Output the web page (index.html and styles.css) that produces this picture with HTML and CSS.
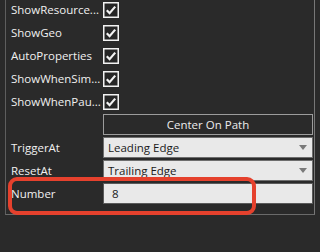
FILE: index.html
```html
<!DOCTYPE html>
<html>
<head>
<meta charset="utf-8">
<link rel="stylesheet" href="styles.css">
</head>
<body>
<div class="group">
  <div class="row"><div class="label">ShowResource...</div><div class="value"><span class="check"><svg width="16" height="16" viewBox="0 0 16 16"><rect x="0.75" y="0.75" width="14.5" height="14.5" fill="#262626" stroke="#f2f2f2" stroke-width="1.5"/><path d="M3.8 8.2 L6.6 11.2 L12.2 4.6" fill="none" stroke="#f2f2f2" stroke-width="2.2"/></svg></span></div></div>
  <div class="row"><div class="label">ShowGeo</div><div class="value"><span class="check"><svg width="16" height="16" viewBox="0 0 16 16"><rect x="0.75" y="0.75" width="14.5" height="14.5" fill="#262626" stroke="#f2f2f2" stroke-width="1.5"/><path d="M3.8 8.2 L6.6 11.2 L12.2 4.6" fill="none" stroke="#f2f2f2" stroke-width="2.2"/></svg></span></div></div>
  <div class="row"><div class="label">AutoProperties</div><div class="value"><span class="check"><svg width="16" height="16" viewBox="0 0 16 16"><rect x="0.75" y="0.75" width="14.5" height="14.5" fill="#262626" stroke="#f2f2f2" stroke-width="1.5"/><path d="M3.8 8.2 L6.6 11.2 L12.2 4.6" fill="none" stroke="#f2f2f2" stroke-width="2.2"/></svg></span></div></div>
  <div class="row"><div class="label">ShowWhenSim...</div><div class="value"><span class="check"><svg width="16" height="16" viewBox="0 0 16 16"><rect x="0.75" y="0.75" width="14.5" height="14.5" fill="#262626" stroke="#f2f2f2" stroke-width="1.5"/><path d="M3.8 8.2 L6.6 11.2 L12.2 4.6" fill="none" stroke="#f2f2f2" stroke-width="2.2"/></svg></span></div></div>
  <div class="row"><div class="label">ShowWhenPau...</div><div class="value"><span class="check"><svg width="16" height="16" viewBox="0 0 16 16"><rect x="0.75" y="0.75" width="14.5" height="14.5" fill="#262626" stroke="#f2f2f2" stroke-width="1.5"/><path d="M3.8 8.2 L6.6 11.2 L12.2 4.6" fill="none" stroke="#f2f2f2" stroke-width="2.2"/></svg></span></div></div>
  <div class="row"><div class="label"></div><div class="value"><div class="button">Center On Path</div></div></div>
  <div class="row"><div class="label">TriggerAt</div><div class="value"><div class="combo"><span>Leading Edge</span><span class="arrow"></span></div></div></div>
  <div class="row"><div class="label">ResetAt</div><div class="value"><div class="combo"><span>Trailing Edge</span><span class="arrow"></span></div></div></div>
  <div class="row"><div class="label">Number</div><div class="value"><div class="textbox">8</div></div></div>
</div>
<div class="annot"></div>
</body>
</html>
```
FILE: styles.css
```css
html, body {
  margin: 0;
  padding: 0;
}
body {
  background: #2a2a2a;
  width: 320px;
  height: 252px;
  overflow: hidden;
  position: relative;
  font-family: "Open Sans", "Noto Sans", sans-serif;
  font-size: 11.5px;
  color: #f0f0f0;
}
.group {
  margin-top: -2px;
  margin-left: 5px;
  width: 307px;
  border-left: 1px solid #5e5e5e;
  border-right: 1px solid #777;
  border-bottom: 1px solid #6a6a6a;
  padding-bottom: 9px;
  padding-right: 1px;
}
.row {
  height: 23px;
  display: flex;
  align-items: center;
}
.label {
  width: 92px;
  padding-left: 5px;
  white-space: nowrap;
  flex: none;
}
.value {
  flex: 1;
  display: flex;
  align-items: center;
  height: 23px;
}
.check {
  display: block;
  width: 16px;
  height: 16px;
}
.check svg { display: block; }
.button, .combo, .textbox {
  box-sizing: border-box;
  height: 21px;
  width: 100%;
  margin-top: 1px;
  align-self: flex-start;
}
.button {
  border: 1px solid #9c9c9c;
  background: #2a2a2a;
  color: #ececec;
  display: flex;
  align-items: center;
  justify-content: center;
}
.combo {
  background: #e9e9e9;
  border: 1px solid #6e6e6e;
  color: #1a1a1a;
  display: flex;
  align-items: center;
  justify-content: space-between;
  padding-left: 4px;
  padding-right: 5px;
}
.arrow {
  width: 0;
  height: 0;
  border-left: 4px solid transparent;
  border-right: 4px solid transparent;
  border-top: 5px solid #7a7a7a;
}
.textbox {
  background: #e9e9e9;
  border: 1px solid #5a5a5a;
  color: #1a1a1a;
  display: flex;
  align-items: center;
  padding-left: 8px;
}
.annot {
  position: absolute;
  left: 8px;
  top: 177px;
  width: 240px;
  height: 30px;
  border: 4.5px solid #e5412d;
  border-radius: 9px;
}
```
